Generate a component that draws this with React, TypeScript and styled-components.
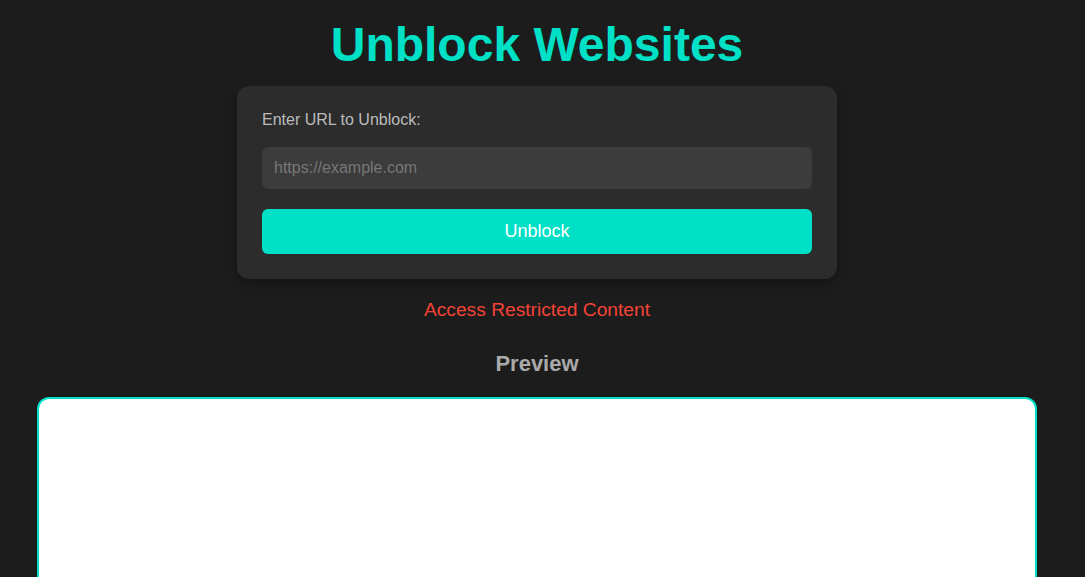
import React from "react";
import styled, { createGlobalStyle } from "styled-components";

const GlobalStyle = createGlobalStyle`
  html, body {
    margin: 0;
    padding: 0;
    background: #1c1c1c;
    font-family: "Liberation Sans", Arial, sans-serif;
    overflow: hidden;
  }
`;

const Page = styled.main`
  display: flex;
  flex-direction: column;
  align-items: center;
  padding: 17px 48px 0 37px;
`;

const Title = styled.h1`
  margin: 0 0 14px;
  font-size: 48px;
  line-height: 55px;
  font-weight: 700;
  color: #00e0c6;
`;

const Card = styled.section`
  width: 600px;
  box-sizing: border-box;
  padding: 25px;
  background: #2c2c2c;
  border-radius: 12px;
  box-shadow: 0 4px 10px rgba(0, 0, 0, 0.3);
  display: flex;
  flex-direction: column;
`;

const Label = styled.label`
  font-size: 16px;
  color: #bbbbbb;
  margin-bottom: 18px;
`;

const UrlInput = styled.input`
  font-family: inherit;
  font-size: 16px;
  padding: 12px;
  border: none;
  outline: none;
  border-radius: 6px;
  background: #3c3c3c;
  color: #eee;
  margin-bottom: 20px;
  &::placeholder {
    color: #777777;
  }
`;

const Button = styled.button`
  font-family: inherit;
  font-size: 18px;
  padding: 12px;
  border: none;
  border-radius: 6px;
  background: #00e0c6;
  color: #ffffff;
  cursor: pointer;
`;

const Notice = styled.p`
  margin: 20px 0 0;
  font-size: 19.2px;
  line-height: 22px;
  color: #f44336;
`;

const PreviewTitle = styled.h2`
  margin: 30px 0 21px;
  font-size: 22px;
  line-height: 25px;
  font-weight: 700;
  color: #aaaaaa;
`;

const PreviewFrame = styled.div`
  width: 1000px;
  height: 500px;
  box-sizing: border-box;
  border: 2px solid #00e0c6;
  border-radius: 12px;
  background: #ffffff;
`;

export default function App() {
  return (
    <>
      <GlobalStyle />
      <Page>
        <Title>Unblock Websites</Title>
        <Card>
          <Label htmlFor="url">Enter URL to Unblock:</Label>
          <UrlInput id="url" type="text" placeholder="https://example.com" />
          <Button>Unblock</Button>
        </Card>
        <Notice>Access Restricted Content</Notice>
        <PreviewTitle>Preview</PreviewTitle>
        <PreviewFrame />
      </Page>
    </>
  );
}
